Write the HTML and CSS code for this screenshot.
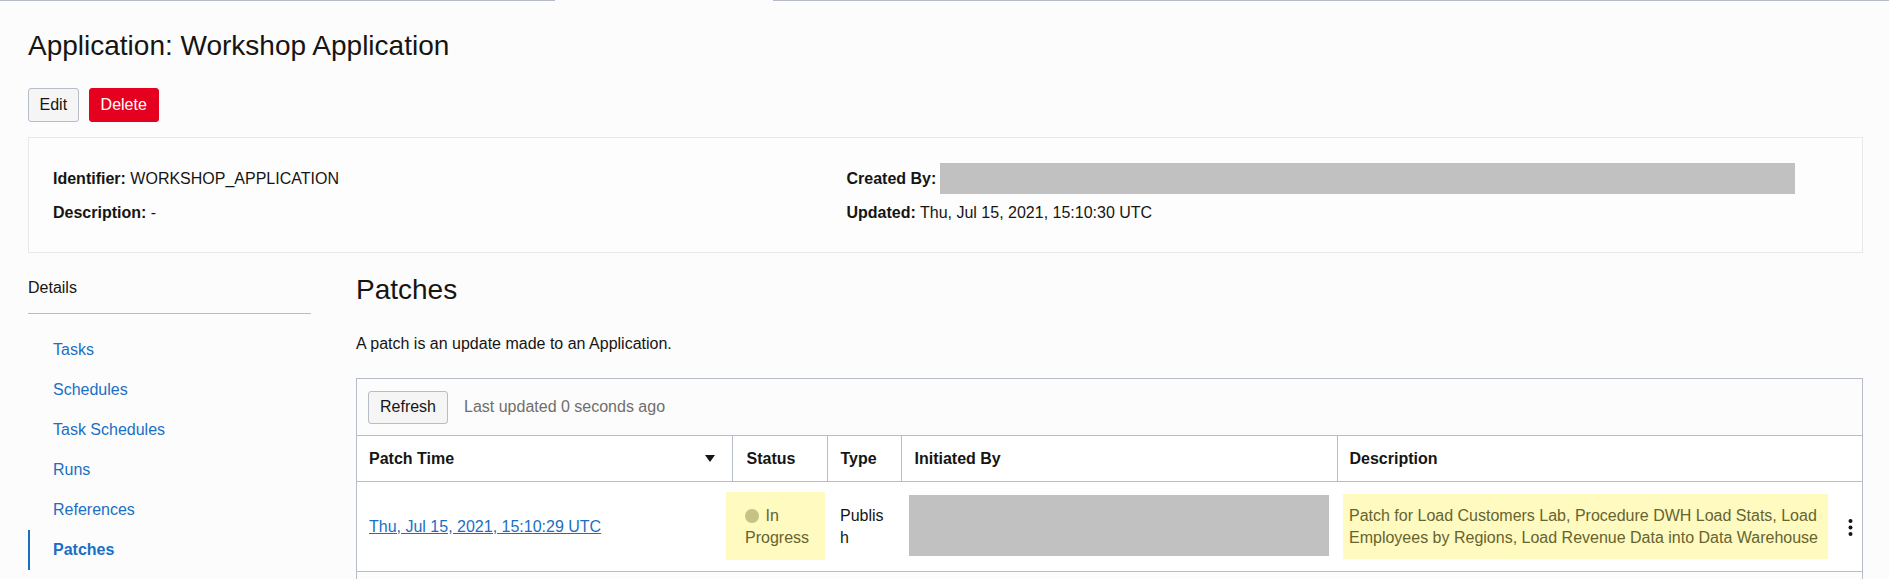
FILE: index.html
```html
<!DOCTYPE html>
<html lang="en">
<head>
    <meta charset="UTF-8">
    <title>Application: Workshop Application</title>
    <link rel="stylesheet" href="styles.css">
</head>
<body>
    <div class="top-tabs">
        <div class="top-line top-line-left"></div>
        <div class="top-gap"></div>
        <div class="top-line"></div>
    </div>
    <div class="page">
        <h1 class="page-title">Application: Workshop Application</h1>
        <div class="actions">
            <button class="btn">Edit</button>
            <button class="btn btn-danger">Delete</button>
        </div>
        <div class="info-card">
            <div class="info-col">
                <div class="info-row"><b>Identifier:</b> WORKSHOP_APPLICATION</div>
                <div class="info-row"><b>Description:</b> -</div>
            </div>
            <div class="info-col">
                <div class="info-row"><b>Created By:</b><span class="redact redact-creator"></span></div>
                <div class="info-row"><b>Updated:</b> Thu, Jul 15, 2021, 15:10:30 UTC</div>
            </div>
        </div>
        <div class="content">
            <div class="sidebar">
                <div class="side-title">Details</div>
                <ul class="side-nav">
                    <li><a href="#">Tasks</a></li>
                    <li><a href="#">Schedules</a></li>
                    <li><a href="#">Task Schedules</a></li>
                    <li><a href="#">Runs</a></li>
                    <li><a href="#">References</a></li>
                    <li class="active"><a href="#">Patches</a></li>
                </ul>
            </div>
            <div class="main">
                <h2 class="main-title">Patches</h2>
                <p class="main-desc">A patch is an update made to an Application.</p>
                <div class="panel">
                    <div class="toolbar">
                        <button class="btn btn-small">Refresh</button>
                        <span class="updated">Last updated 0 seconds ago</span>
                    </div>
                    <table class="patches">
                        <colgroup>
                            <col class="col-time">
                            <col class="col-status">
                            <col class="col-type">
                            <col class="col-by">
                            <col>
                        </colgroup>
                        <thead>
                            <tr>
                                <th><div class="th-sort">Patch Time <span class="sort-arrow"></span></div></th>
                                <th class="cell-status">Status</th>
                                <th class="cell-type">Type</th>
                                <th class="cell-by">Initiated By</th>
                                <th>Description</th>
                            </tr>
                        </thead>
                        <tbody>
                            <tr>
                                <td><a href="#">Thu, Jul 15, 2021, 15:10:29 UTC</a></td>
                                <td class="cell-status">
                                    <div class="mark mark-status"><span class="dot"></span> In Progress</div>
                                </td>
                                <td class="cell-type">Publis<br>h</td>
                                <td class="cell-by"><div class="redact redact-by"></div></td>
                                <td class="desc-cell">
                                    <div class="mark mark-desc">Patch for Load Customers Lab, Procedure DWH Load Stats, Load Employees by Regions, Load Revenue Data into Data Warehouse</div>
                                    <svg class="kebab" width="5" height="17" viewBox="0 0 5 17"><circle cx="2.5" cy="2" r="2"/><circle cx="2.5" cy="8.5" r="2"/><circle cx="2.5" cy="15" r="2"/></svg>
                                </td>
                            </tr>
                        </tbody>
                    </table>
                    <div class="panel-tail"></div>
                </div>
            </div>
        </div>
    </div>
</body>
</html>
```

FILE: styles.css
```css
*{
    margin: 0;
    padding: 0;
    box-sizing: border-box;
}
html,body{
    height: 579px;
    overflow: hidden;
}
body{
    background: #fcfcfc;
    color: #161513;
    font-family: "Liberation Sans", Arial, sans-serif;
    font-size: 16px;
}
a{
    color: #1a6fc4;
    text-decoration: none;
}
.top-tabs{
    display: flex;
    height: 1px;
}
.top-line{
    flex: 1;
    background: #b6bcc8;
}
.top-line-left{
    flex: none;
    width: 555px;
}
.top-gap{
    width: 218px;
}
.page{
    padding: 0 26px 0 28px;
}
.page-title{
    font-size: 28px;
    font-weight: 400;
    line-height: 32px;
    padding-top: 29px;
}
.actions{
    display: flex;
    gap: 10px;
    margin-top: 26px;
}
.btn{
    height: 34px;
    padding: 0 10.5px;
    border: 1px solid #b6bcc8;
    border-radius: 3px;
    background: #f5f5f6;
    color: #161513;
    font-family: inherit;
    font-size: 16px;
}
.btn-danger{
    padding: 0 11px;
    border-color: #e5001f;
    background: #e5001f;
    color: #fff;
}
.btn-small{
    height: 33px;
    width: 80px;
    padding: 0;
}
.info-card{
    display: flex;
    height: 116px;
    margin-top: 15px;
    padding: 24px 24px 0;
    border: 1px solid #e8e8ea;
    background: #fdfdfd;
}
.info-col{
    width: 793.5px;
}
.info-row{
    display: flex;
    align-items: center;
    height: 34px;
    white-space: pre;
}
.redact{
    background: #c1c1c1;
}
.redact-creator{
    flex: none;
    width: 855px;
    height: 31px;
    margin: -2px 0 0 4px;
}
.content{
    display: flex;
    margin-top: 18px;
}
.sidebar{
    width: 283px;
    margin-right: 45px;
}
.side-title{
    height: 43px;
    padding-top: 7px;
    line-height: 20px;
    border-bottom: 1px solid #b6bcc8;
}
.side-nav{
    list-style: none;
    margin-top: 16px;
}
.side-nav li{
    height: 40px;
    line-height: 39px;
    padding-left: 25px;
}
.side-nav .active{
    border-left: 2px solid #1a6fc4;
    padding-left: 23px;
    font-weight: 700;
}
.main{
    flex: 1;
}
.main-title{
    font-size: 28px;
    font-weight: 400;
    line-height: 32px;
    padding-top: 3px;
}
.main-desc{
    margin-top: 28px;
    line-height: 20px;
}
.panel{
    margin-top: 24px;
    border: 1px solid #b6bcc8;
    border-bottom: 0;
}
.toolbar{
    display: flex;
    align-items: center;
    gap: 16px;
    height: 56px;
    padding-left: 11px;
}
.updated{
    color: #6f6e6c;
    margin-top: -1px;
}
.patches{
    width: 100%;
    table-layout: fixed;
    border-collapse: collapse;
    background: #fff;
}
.col-time{
    width: 375px;
}
.col-status{
    width: 95px;
}
.col-type{
    width: 74px;
}
.col-by{
    width: 436px;
}
.patches th{
    height: 46px;
    padding: 0 12px;
    text-align: left;
    font-weight: 700;
    border-top: 1px solid #b6bcc8;
    border-bottom: 1px solid #b6bcc8;
    border-left: 1px solid #b6bcc8;
}
.patches th:first-child{
    border-left: 0;
}
.th-sort{
    display: flex;
    justify-content: space-between;
    align-items: center;
    padding-right: 5px;
}
.sort-arrow{
    width: 0;
    height: 0;
    border-left: 5.5px solid transparent;
    border-right: 5.5px solid transparent;
    border-top: 7px solid #161513;
}
.patches td{
    height: 90px;
    padding: 0 12px;
    line-height: 22px;
    vertical-align: middle;
    border-bottom: 1px solid #b6bcc8;
}
.patches td a{
    text-decoration: underline;
}
.patches .cell-status{
    padding-left: 14px;
}
.patches .cell-type,
.patches .cell-by{
    padding-left: 13px;
}
.mark{
    background: #fffac0;
    color: #66642f;
}
.mark-status{
    width: 99px;
    height: 68px;
    margin: -2px 0 0 -20px;
    padding: 13px 8px 0 19px;
}
.dot{
    display: inline-block;
    width: 14px;
    height: 14px;
    margin-right: 2px;
    border-radius: 50%;
    background: #c4c284;
    vertical-align: -2px;
}
.redact-by{
    width: 420px;
    height: 61px;
    margin: -2px 0 0 -5px;
}
.desc-cell{
    position: relative;
}
.mark-desc{
    width: 485px;
    height: 65px;
    margin: -1px 0 0 -6px;
    padding: 11px 6px 0;
}
.kebab{
    position: absolute;
    right: 9px;
    top: 37px;
    fill: #161513;
}
.panel-tail{
    height: 12px;
}
```
